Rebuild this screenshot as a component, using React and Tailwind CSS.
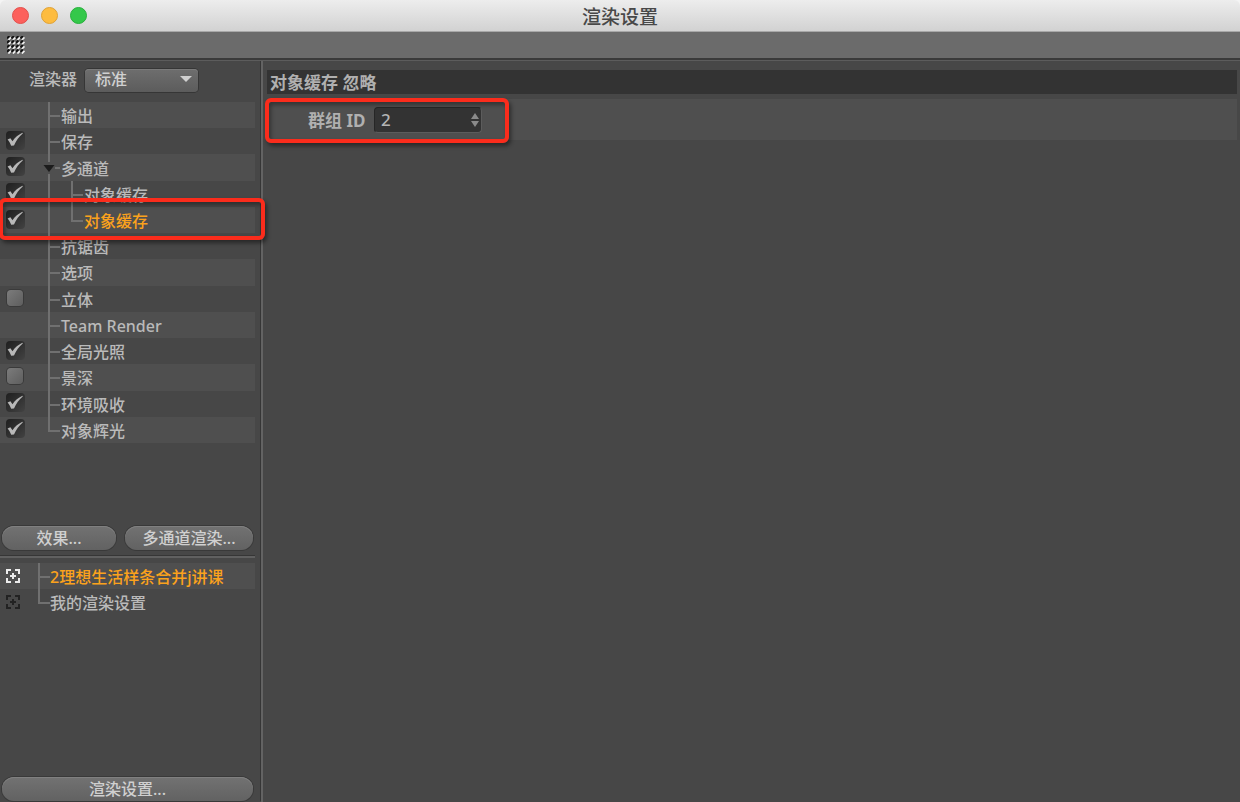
import { useState } from 'react';
import clsx from 'clsx';

const SETTINGS = [
  { id: 'output', name: '输出' },
  { id: 'save', name: '保存', checked: true },
  { id: 'multipass', name: '多通道', checked: true, expandable: true },
  { id: 'buffer1', name: '对象缓存', checked: true, child: true },
  { id: 'buffer2', name: '对象缓存', checked: true, child: true, lastChild: true },
  { id: 'aa', name: '抗锯齿' },
  { id: 'options', name: '选项' },
  { id: 'stereo', name: '立体', checked: false },
  { id: 'team', name: 'Team Render' },
  { id: 'gi', name: '全局光照', checked: true },
  { id: 'dof', name: '景深', checked: false },
  { id: 'ao', name: '环境吸收', checked: true },
  { id: 'glow', name: '对象辉光', checked: true, last: true },
];

const PRESETS = [
  { id: 'p1', name: '2理想生活样条合并j讲课' },
  { id: 'p2', name: '我的渲染设置', last: true },
];

// One elbow of the tree: vertical line with a tick to the right
const Branch = ({ last }) => (
  <span className="flex w-3 shrink-0 flex-col self-stretch">
    <span className="h-[15px] shrink-0 border-b-2 border-l-2 border-[#707070]" />
    {!last && <span className="flex-1 border-l-2 border-[#707070]" />}
  </span>
);

const Tick = ({ label, checked, onChange }) => (
  <span className="relative flex size-5 items-center justify-center">
    <input
      type="checkbox"
      aria-label={label}
      checked={checked}
      onChange={onChange}
      className="peer size-4 appearance-none rounded bg-linear-to-br from-[#7c7c7c] to-[#5e5e5e] shadow-[0_0_0_1px_#3a3a3a] checked:size-[19px] checked:from-[#1f1f1f] checked:to-[#434343] checked:shadow-none"
    />
    <svg
      viewBox="0 0 20 20"
      className="pointer-events-none absolute inset-0 hidden size-5 peer-checked:block"
    >
      <path d="M2.6 9.4 L5.4 8.2 L7.5 11.2 C10 7.6 13.2 4.8 17.4 2.8 L17.8 3.6 C14 6.8 11.2 10.6 9 15.6 L6.2 15.8 C5.4 13.4 4.2 11.2 2.6 9.4 Z" fill="#b8b8b8" />
    </svg>
  </span>
);

const PillButton = ({ children, className }) => (
  <button
    type="button"
    className={clsx(
      'h-6 rounded-full bg-linear-to-b from-[#727272] to-[#626262] text-base leading-6 font-medium text-[#d0d0d0] shadow-[0_0_0_1px_#393939,inset_0_1px_0_#808080]',
      className
    )}
  >
    {children}
  </button>
);

const TargetIcon = ({ active }) => (
  <svg
    viewBox="0 0 14 14"
    className={clsx('size-3.5', active ? 'text-[#ececec]' : 'text-[#222222]')}
    fill="none"
    stroke="currentColor"
    strokeWidth="2"
  >
    <path d="M1 5V1h4M9 1h4v4M13 9v4H9M5 13H1V9" />
    <path d="M7 4v6M4 7h6" />
  </svg>
);

const Highlight = ({ className }) => (
  <span
    className={clsx(
      'pointer-events-none absolute z-10 rounded-md border-4 border-[#fb2c1c] shadow-[2px_3px_4px_rgba(0,0,0,0.45),inset_2px_3px_4px_rgba(0,0,0,0.35)]',
      className
    )}
  />
);

const TitleBar = () => (
  <header className="relative flex h-8 shrink-0 items-center justify-center rounded-t-md border-b border-[#a8a8a8] bg-linear-to-b from-[#ededed] to-[#d2d2d2]">
    <div className="absolute left-3 flex gap-3">
      <button type="button" aria-label="关闭" className="size-[17px] rounded-full border border-[#e2504c] bg-[#fc605c]" />
      <button type="button" aria-label="最小化" className="size-[17px] rounded-full border border-[#dfa236] bg-[#fdbc40]" />
      <button type="button" aria-label="缩放" className="size-[17px] rounded-full border border-[#27b03c] bg-[#34c84a]" />
    </div>
    <h1 className="pt-0.5 text-[19px] leading-6 text-[#484848]">渲染设置</h1>
  </header>
);

const Toolbar = () => (
  <div className="flex h-7 shrink-0 items-center border-b-2 border-[#3a3a3a] bg-[#6b6b6b] px-[7px]">
    <svg viewBox="0 0 18 18" className="size-[18px]">
      {[0, 1, 2, 3].map((row) =>
        [0, 1, 2, 3].map((col) => (
          <g key={`${row}-${col}`} transform={`translate(${col * 4.5} ${row * 4.5})`}>
            <path d="M0 2.4 L2.4 0" stroke="#111111" strokeWidth="1.9" />
            <path d="M1.4 4 L4 1.4" stroke="#f2f2f2" strokeWidth="1.7" />
          </g>
        ))
      )}
    </svg>
  </div>
);

const App = () => {
  const [settings, setSettings] = useState(SETTINGS);
  const [selected, setSelected] = useState('buffer2');
  const [preset, setPreset] = useState('p1');
  const [groupId, setGroupId] = useState(2);

  const toggle = (id) => {
    setSettings(settings.map((s) => (s.id === id ? { ...s, checked: !s.checked } : s)));
  };

  return (
    <div className="bg-[#f4f4f4]">
      <div className="flex h-screen flex-col overflow-hidden font-['Noto_Sans','Noto_Sans_CJK_SC',sans-serif] text-base font-medium text-[#bababa]">
        <TitleBar />
        <Toolbar />

        <div className="flex min-h-0 flex-1 border-t border-[#5c5c5c] bg-[#474747]">
          <aside className="flex w-[263px] shrink-0 flex-col border-r-2 border-[#636363] pb-px">
            <div className="flex h-[41px] items-start border-r border-[#363636] pt-[6px] pl-[29px]">
              <label htmlFor="renderer" className="w-14 leading-6">渲染器</label>
              <div className="relative">
                <select
                  id="renderer"
                  className="h-[23px] w-[113px] appearance-none rounded bg-linear-to-b from-[#6e6e6e] to-[#5c5c5c] pb-0.5 pl-[10px] text-base leading-5 text-[#d0d0d0] shadow-[0_0_0_1px_#363636,inset_0_1px_0_#7a7a7a]"
                >
                  <option>标准</option>
                </select>
                <svg viewBox="0 0 12 6" className="pointer-events-none absolute top-[9px] right-[6px] h-1.5 w-3">
                  <path d="M0 0h12L6 6z" fill="#d0d0d0" />
                </svg>
              </div>
            </div>

            <div className="flex min-h-0 flex-1 flex-col border-r border-[#363636] pr-[5px]">
              <ul className="grid h-[341px] shrink-0 auto-rows-fr">
                {settings.map((item) => (
                  <li key={item.id} className="relative flex items-center odd:bg-[#4f4f4f]">
                    <span className="flex w-12 shrink-0 pb-0.5 pl-[5px]">
                      {item.checked !== undefined && (
                        <Tick label={item.name} checked={item.checked} onChange={() => toggle(item.id)} />
                      )}
                    </span>
                    {item.child && <span className="w-[23px] self-stretch border-l-2 border-[#707070]" />}
                    <Branch last={item.last || item.lastChild} />
                    {item.expandable && (
                      <button
                        type="button"
                        aria-label="折叠"
                        className="absolute top-2 left-[43px] flex h-3 w-3 items-center justify-center bg-[#4f4f4f]"
                      >
                        <svg viewBox="0 0 12 7" className="h-[7px] w-3">
                          <path d="M0.5 0h11L6 7z" fill="#1c1c1c" />
                        </svg>
                      </button>
                    )}
                    <button
                      type="button"
                      onClick={() => setSelected(item.id)}
                      className={clsx('ml-px pt-0.5 leading-6', item.id === selected && 'text-[#fba21c]')}
                    >
                      {item.name}
                    </button>
                    {item.id === 'buffer2' && <Highlight className="-top-[9px] -right-[10px] -bottom-[7px] -left-px" />}
                  </li>
                ))}
              </ul>

              <div className="mt-[83px] flex gap-[9px] pr-0.5 pl-0.5">
                <PillButton className="w-[114px]">效果...</PillButton>
                <PillButton className="flex-1">多通道渲染...</PillButton>
              </div>

              <ul className="mt-1.5 border-t-2 border-[#606060] pt-[5px] shadow-[0_-1px_0_#363636]">
                {PRESETS.map((item) => (
                  <li key={item.id} className="flex h-[26px] items-center odd:bg-[#4f4f4f]">
                    <span className="w-[38px] shrink-0 pl-1.5">
                      <TargetIcon active={item.id === preset} />
                    </span>
                    <Branch last={item.last} />
                    <button
                      type="button"
                      onClick={() => setPreset(item.id)}
                      className={clsx('pt-0.5 leading-6', item.id === preset && 'text-[#fba21c]')}
                    >
                      {item.name}
                    </button>
                  </li>
                ))}
              </ul>

              <div className="mt-auto flex pr-0.5 pl-0.5">
                <PillButton className="flex-1">渲染设置...</PillButton>
              </div>
            </div>
          </aside>

          <main className="min-w-0 flex-1 pt-[9px] pr-[3px] pl-1">
            <h2 className="h-6 bg-[#333333] pl-[3px] text-[17px] leading-[26px] font-bold text-[#b0b0b0]">对象缓存 忽略</h2>
            <div className="relative mt-[5px] flex h-[41px] items-center bg-[#4f4f4f] pl-[41px]">
              <label htmlFor="group-id" className="w-[66px] pt-0.5 text-[17px] leading-6 font-bold text-[#b0b0b0]">群组 ID</label>
              <div className="relative">
                <input
                  id="group-id"
                  type="number"
                  value={groupId}
                  onChange={(e) => setGroupId(e.target.value)}
                  className="block h-[26px] w-[108px] appearance-none rounded-sm border border-t-[#262626] border-r-[#5c5c5c] border-b-[#5c5c5c] border-l-[#262626] bg-[#333333] pl-1.5 text-[17px] text-[#b4b4b4] [appearance:textfield] [&::-webkit-inner-spin-button]:appearance-none"
                />
                <svg viewBox="0 0 8 14" className="pointer-events-none absolute top-1.5 right-[3px] h-3.5 w-2">
                  <path d="M0 6h8L4 0zM0 8h8L4 14z" fill="#8a8a8a" />
                </svg>
              </div>
              <Highlight className="-top-px -bottom-[3px] -left-0.5 w-[244px]" />
            </div>
          </main>
        </div>
      </div>
    </div>
  );
};

export default App;
